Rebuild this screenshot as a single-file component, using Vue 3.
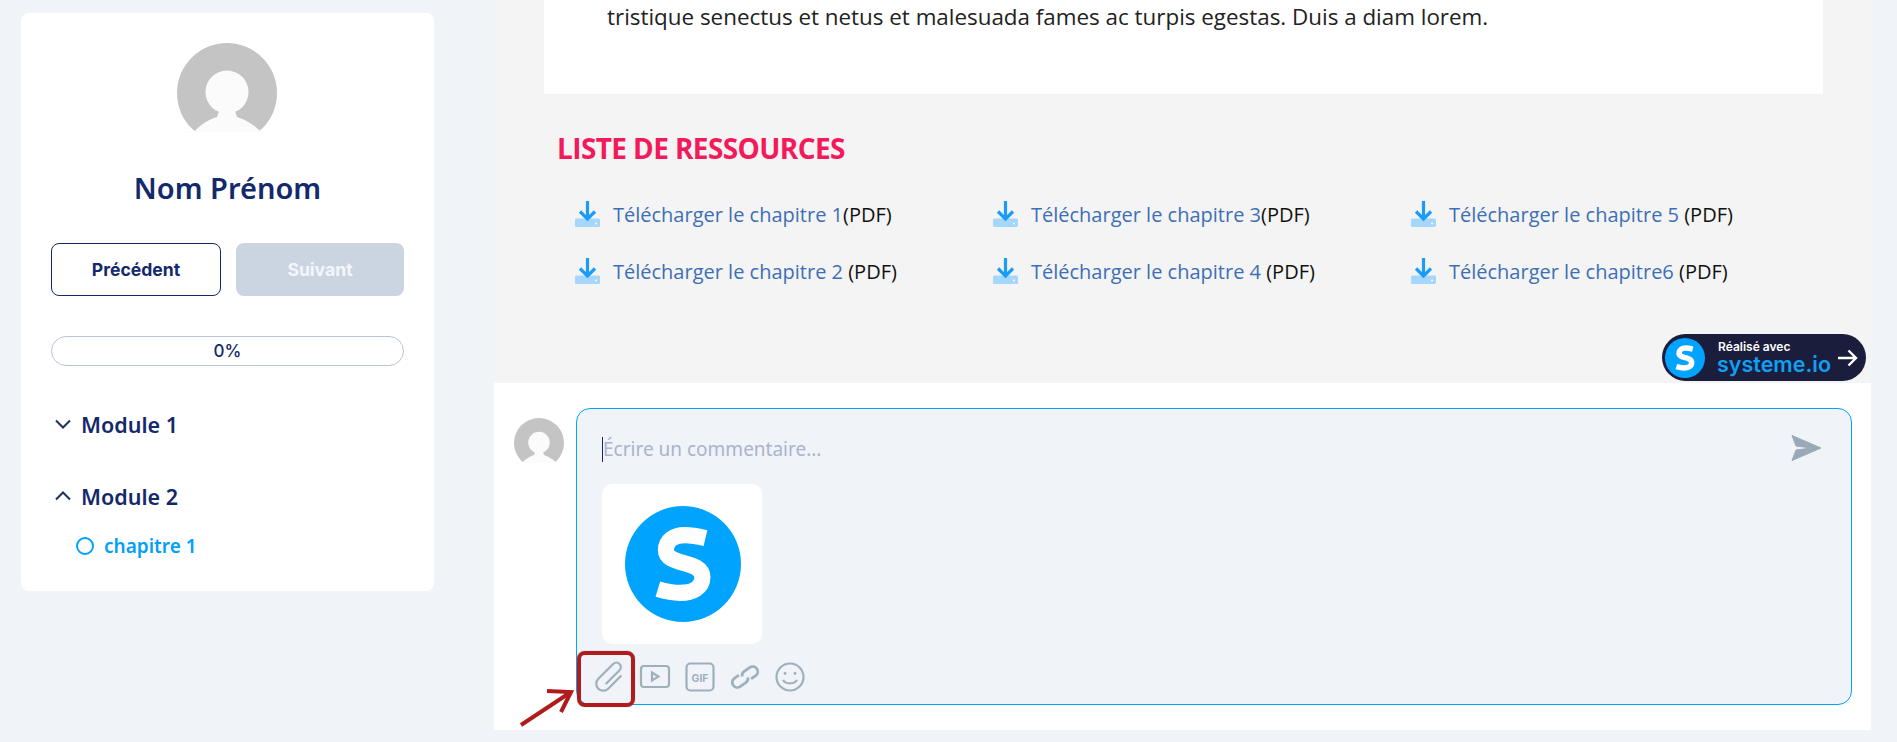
<script setup>
const resources = [
  { label: 'Télécharger le chapitre 1', pdf: '(PDF)' },
  { label: 'Télécharger le chapitre 3', pdf: '(PDF)' },
  { label: 'Télécharger le chapitre 5', pdf: ' (PDF)' },
  { label: 'Télécharger le chapitre 2', pdf: ' (PDF)' },
  { label: 'Télécharger le chapitre 4', pdf: ' (PDF)' },
  { label: 'Télécharger le chapitre6', pdf: ' (PDF)' }
]
</script>

<template>
  <div class="page">
    <aside class="card">
      <svg class="avatar" viewBox="0 0 100 100">
        <circle cx="50" cy="50" r="50" fill="#c4c4c4" />
        <circle cx="50" cy="49" r="21.500" fill="#fbfbfb" />
        <path d="M0 100V88H18C22 83 30 77 40 74L42 68H58L60 74C70 77 78 83 83 88H100V100Z" fill="#fbfbfb" />
        <path d="M0 100V89H100V100Z" fill="#fff" />
      </svg>
      <h2 class="name">Nom Prénom</h2>
      <div class="buttons">
        <button class="btn prev">Précédent</button>
        <button class="btn next">Suivant</button>
      </div>
      <div class="progress">0%</div>
      <div class="module first">
        <svg class="chev" viewBox="0 0 16 10"><path d="M1 1.500L8 8.500L15 1.500" /></svg>
        <span>Module 1</span>
      </div>
      <div class="module second">
        <svg class="chev" viewBox="0 0 16 10"><path d="M1 8.500L8 1.500L15 8.500" /></svg>
        <span>Module 2</span>
      </div>
      <div class="lesson">
        <span class="ring"></span>
        <span>chapitre 1</span>
      </div>
    </aside>

    <main class="main">
      <section class="content">
        <div class="article">
          <p>tristique senectus et netus et malesuada fames ac turpis egestas. Duis a diam lorem.</p>
        </div>
        <h3 class="res-title">LISTE DE RESSOURCES</h3>
        <div class="res-grid">
          <div v-for="r in resources" :key="r.label" class="res">
            <svg class="dl" viewBox="0 0 25 26">
              <rect x="0" y="17.500" width="25" height="8.500" rx="1.500" fill="#a5d6fb" />
              <circle cx="21" cy="22.500" r="1" fill="#fff" />
              <path d="M12.500 0V18M5 10.500L12.500 18L20 10.500" fill="none" stroke="#1a9cf8" stroke-width="3.200" />
            </svg>
            <span class="res-link">{{ r.label }}</span><span class="pdf">{{ r.pdf }}</span>
          </div>
        </div>
        <div class="badge">
          <svg class="badge-logo" viewBox="0 0 346 346">
            <circle cx="173" cy="173" r="173" fill="#00a4ff" />
            <path d="M240 96C215 90 195 87 178 87C145 87 122 104 122 131C122 180 231 160 231 212C231 245 200 259 165 259C140 259 118 254 98 248" fill="none" stroke="#fff" stroke-width="48" />
          </svg>
          <div class="badge-text">
            <span class="made">Réalisé avec</span>
            <span class="brand">systeme.io</span>
          </div>
          <svg class="badge-arrow" viewBox="0 0 20 18"><path d="M0 9H18M10.500 1.500L18 9L10.500 16.500" /></svg>
        </div>
      </section>

      <section class="comment">
        <svg class="c-avatar" viewBox="0 0 100 100">
          <circle cx="50" cy="50" r="50" fill="#c4c4c4" />
          <circle cx="50" cy="49" r="21.500" fill="#fbfbfb" />
          <path d="M0 100V88H18C22 83 30 77 40 74L42 68H58L60 74C70 77 78 83 83 88H100V100Z" fill="#fbfbfb" />
          <path d="M0 100V89H100V100Z" fill="#fff" />
        </svg>
        <div class="box">
          <div class="row">
            <span class="placeholder">Écrire un commentaire...</span>
            <svg class="send" viewBox="0 0 30 26">
              <path d="M1 0.500L30 13L1 25.500L5 15L20 13L5 11Z" fill="#9aa9b5" stroke="#9aa9b5" stroke-linejoin="round" />
            </svg>
          </div>
          <div class="thumb">
            <svg viewBox="0 0 346 346">
              <circle cx="173" cy="173" r="173" fill="#00a4ff" />
              <path d="M240 96C215 90 195 87 178 87C145 87 122 104 122 131C122 180 231 160 231 212C231 245 200 259 165 259C140 259 118 254 98 248" fill="none" stroke="#fff" stroke-width="48" />
            </svg>
          </div>
          <div class="tools">
            <svg class="tool clip" viewBox="0 0 30 30"><path transform="rotate(45 15 15)" d="M22 6V24.500A7 7 0 0 1 8 24.500V3.500A4.500 4.500 0 0 1 17 3.500V23" /></svg>
            <svg class="tool" viewBox="0 0 30 24"><rect x="1" y="1" width="28" height="21" rx="3" /><path d="M12 7.500V15.500L18.500 11.500Z" /></svg>
            <svg class="tool" viewBox="0 0 30 30"><rect x="1.500" y="1.500" width="27" height="27" rx="4" /><text x="15" y="19.500" text-anchor="middle" class="gif">GIF</text></svg>
            <svg class="tool chain" viewBox="0 0 30 30"><g transform="rotate(-35 15 15)"><path d="M11 10H5.500A5 5 0 0 0 5.500 20H12.500A5 5 0 0 0 17 17" /><path d="M19 20H24.500A5 5 0 0 0 24.500 10H17.500A5 5 0 0 0 13 13" /></g></svg>
            <svg class="tool" viewBox="0 0 30 30"><circle cx="15" cy="15" r="13.500" /><circle cx="10" cy="11.500" r="1.400" class="dot" /><circle cx="20" cy="11.500" r="1.400" class="dot" /><path d="M8 18C11 22.500 19 22.500 22 18" /></svg>
          </div>
        </div>
      </section>
    </main>

    <div class="mark"></div>
    <svg class="mark-arrow" viewBox="0 0 58 42"><path d="M3 37L53 4M29 3L53 4L43 24" /></svg>
  </div>
</template>

<style>
html, body { margin: 0; background: #f0f3f8; overflow: hidden; }
</style>

<style scoped>
.page {
  position: relative;
  display: flex;
  align-items: flex-start;
  height: 742px;
  overflow: hidden;
  background: #f0f3f8;
  font-family: "Open Sans", sans-serif;
}
.card {
  box-sizing: border-box;
  flex: none;
  width: 413px;
  height: 578px;
  margin: 13px 0 0 21px;
  padding: 30px 30px 0;
  background: #fff;
  border-radius: 8px;
  font-family: "Noto Sans", sans-serif;
}
.avatar { display: block; width: 100px; height: 100px; margin: 0 0 0 126px; }
.name {
  margin: 27px 0 0;
  text-align: center;
  font-size: 29px;
  line-height: 36px;
  font-weight: 600;
  color: #14296b;
}
.buttons { display: flex; gap: 15px; margin-top: 37px; }
.btn {
  box-sizing: border-box;
  flex: 1;
  height: 53px;
  border-radius: 8px;
  font-family: Inter, sans-serif;
  font-size: 17.6px;
  font-weight: 700;
}
.prev { background: #fff; border: 1px solid #14296b; color: #14296b; }
.next { background: #cbd5e1; border: 0; color: #f4f6fa; }
.progress {
  box-sizing: border-box;
  height: 30px;
  margin-top: 40px;
  border: 1px solid #bac3d8;
  border-radius: 15px;
  text-align: center;
  font: 500 17px/28px Inter, sans-serif;
  color: #14296b;
}
.module {
  display: flex;
  align-items: center;
  gap: 10px;
  height: 30px;
  padding-left: 4px;
  font-size: 21.5px;
  font-weight: 600;
  color: #14296b;
}
.first { margin-top: 43px; }
.second { margin-top: 42px; }
.chev { width: 16px; height: 10px; fill: none; stroke: #23305e; stroke-width: 2; }
.lesson {
  display: flex;
  align-items: center;
  gap: 10px;
  height: 24px;
  margin-top: 23px;
  padding-left: 25px;
  font-size: 19px;
  font-weight: 600;
  color: #00a0ff;
}
.ring { box-sizing: border-box; width: 18px; height: 18px; border: 2px solid #00a0ff; border-radius: 50%; }

.main { flex: none; width: 1377px; margin-left: 60px; }
.content { position: relative; box-sizing: border-box; height: 383px; background: #f4f4f4; overflow: hidden; padding-left: 50px; }
.article {
  box-sizing: border-box;
  width: 1279px;
  height: 94px;
  padding-left: 63px;
  background: #fff;
  color: #222;
  font-size: 22.4px;
  line-height: 34px;
}
.article p { margin: 0; white-space: nowrap; }
.res-title { margin: 36px 0 0 13px; font-size: 28px; line-height: 36px; font-weight: 700; color: #f31a5c; letter-spacing: -0.6px; }
.res-grid { display: grid; grid-template-columns: repeat(3, 418px); grid-template-rows: 57px 57px; margin: 33px 0 0 31px; }
.res-grid .res:nth-child(1) { grid-area: 1 / 1; }
.res-grid .res:nth-child(2) { grid-area: 1 / 2; }
.res-grid .res:nth-child(3) { grid-area: 1 / 3; }
.res-grid .res:nth-child(4) { grid-area: 2 / 1; }
.res-grid .res:nth-child(5) { grid-area: 2 / 2; }
.res-grid .res:nth-child(6) { grid-area: 2 / 3; }
.res { display: flex; align-items: center; height: 30px; font-size: 20px; white-space: pre; }
.dl { width: 25px; height: 26px; margin-right: 13px; }
.res-link { color: #3d6fb5; }
.pdf { color: #111; }
.badge {
  position: absolute;
  left: 1168px;
  top: 334px;
  box-sizing: border-box;
  display: flex;
  align-items: center;
  width: 204px;
  height: 47px;
  padding-left: 3px;
  background: #1a1d3b;
  border-radius: 24px;
}
.badge-logo { width: 40px; height: 40px; flex: none; }
.badge-text { display: flex; flex-direction: column; margin-left: 12px; font-family: Inter, sans-serif; }
.made { font-size: 12px; line-height: 13px; font-weight: 600; color: #fff; padding-left: 1px; }
.brand { font-family: Inter, sans-serif; font-size: 21.5px; line-height: 23px; font-weight: 600; color: #0ea0f5; }
.badge-arrow { width: 20px; height: 18px; margin-left: 7px; fill: none; stroke: #fff; stroke-width: 2.4; }

.comment {
  box-sizing: border-box;
  display: flex;
  align-items: flex-start;
  height: 347px;
  padding: 25px 19px 0 20px;
  background: #fff;
}
.c-avatar { flex: none; width: 50px; height: 50px; margin-top: 10px; }
.box {
  box-sizing: border-box;
  flex: none;
  width: 1276px;
  height: 297px;
  margin-left: 12px;
  padding: 24px 25px 0;
  background: #f0f3f8;
  border: 1px solid #00a4ff;
  border-radius: 14px;
}
.row { display: flex; align-items: center; justify-content: space-between; height: 30px; }
.placeholder {
  margin-top: 2px;
  border-left: 1px solid #14296b;
  line-height: 25px;
  font-family: "Noto Sans", sans-serif;
  font-size: 19px;
  color: #aab4cc;
}
.send { width: 30px; height: 26px; margin-right: 5px; }
.thumb {
  box-sizing: border-box;
  width: 160px;
  height: 160px;
  margin-top: 21px;
  padding: 22px 23px;
  background: #fff;
  border-radius: 10px;
}
.thumb svg { display: block; width: 116px; height: 116px; }
.tools { display: flex; align-items: center; gap: 15px; height: 44px; margin-top: 11px; margin-left: -7px; }
.tool { width: 30px; height: 30px; fill: none; stroke: #9fb0bd; stroke-width: 2.200; overflow: visible; }
.tool.chain { stroke-width: 2.800; }
.tool .dot { fill: #9fb0bd; stroke: none; }
.tool .gif { font: 700 10.5px Inter, sans-serif; fill: #9fb0bd; stroke: none; }

.mark {
  position: absolute;
  left: 577px;
  top: 651px;
  box-sizing: border-box;
  width: 58px;
  height: 56px;
  border: 4px solid #b01c1c;
  border-radius: 8px;
  box-shadow: 0 0 1px #777;
}
.mark-arrow {
  position: absolute;
  left: 518px;
  top: 688px;
  width: 58px;
  height: 42px;
  fill: none;
  stroke: #b01c1c;
  stroke-width: 4;
}
</style>
